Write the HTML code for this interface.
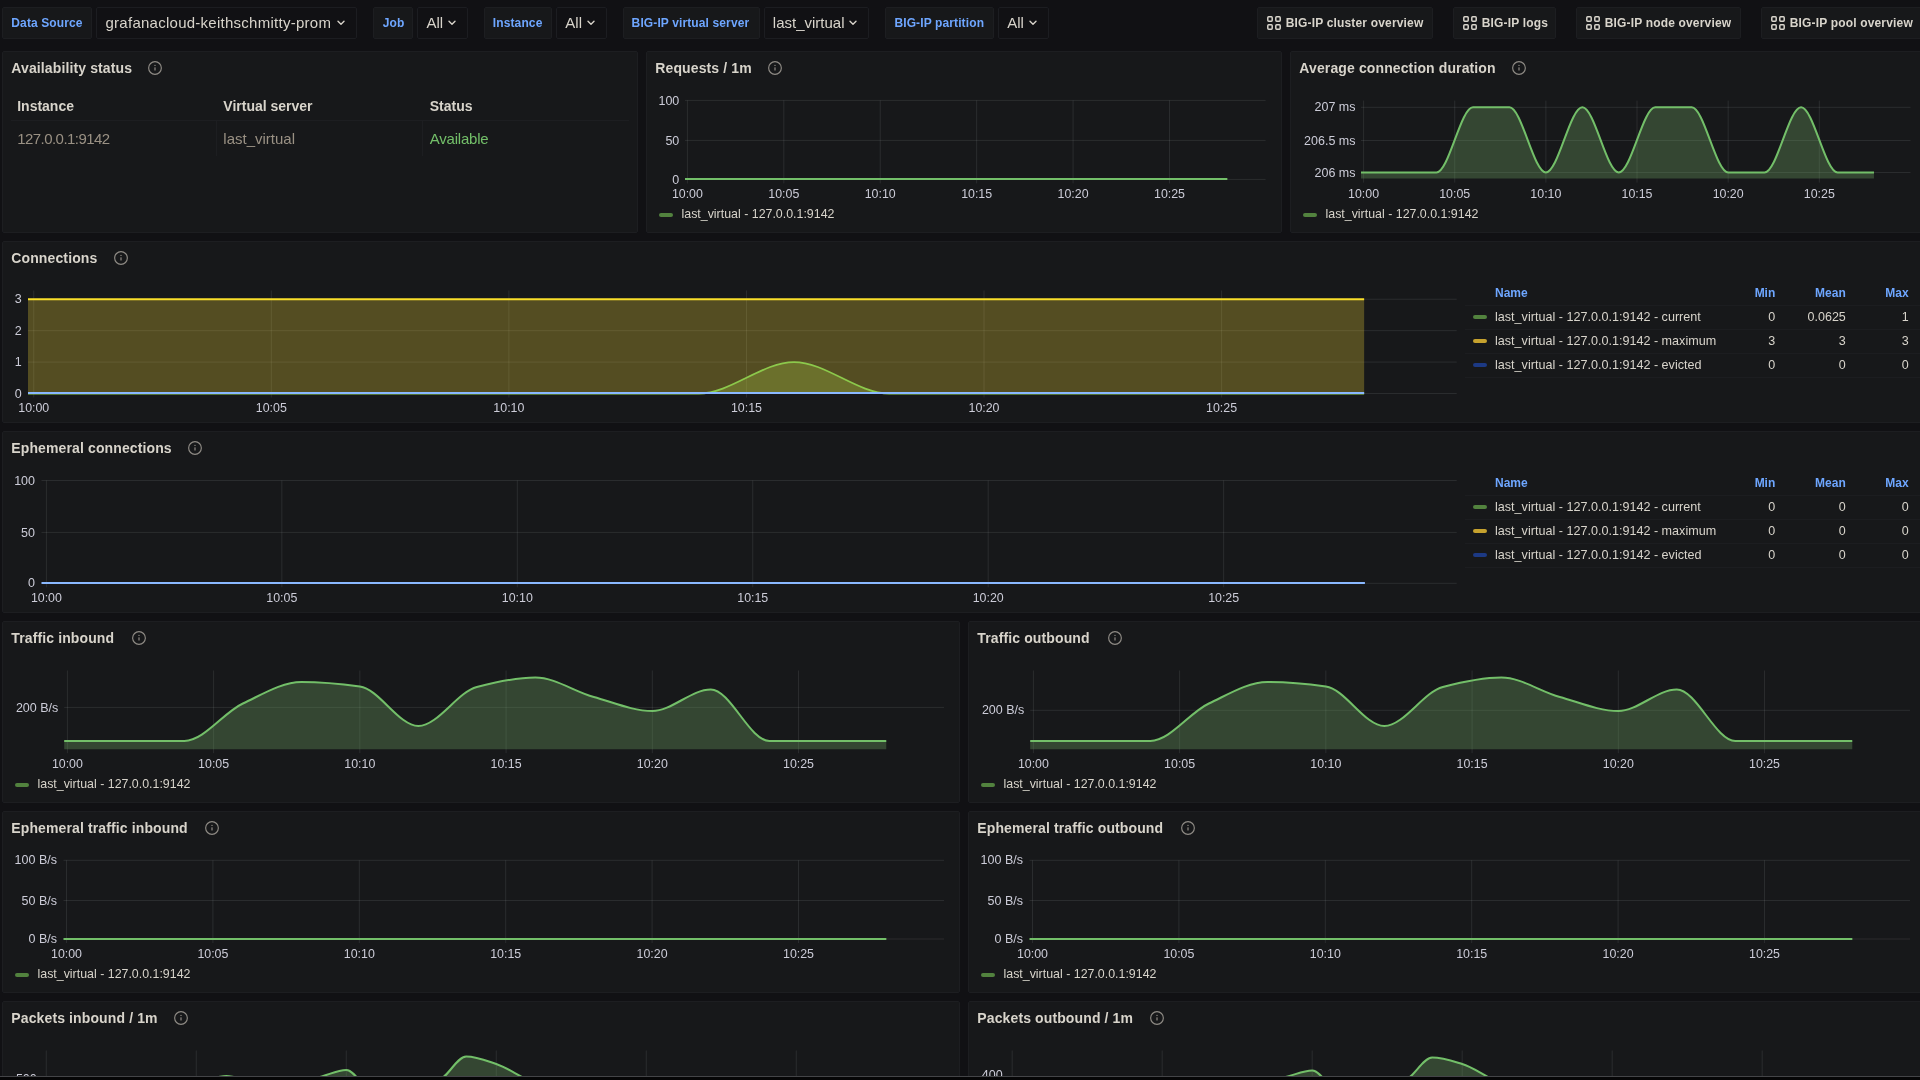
<!DOCTYPE html>
<html><head><meta charset="utf-8"><style>
html,body{margin:0;padding:0;width:1920px;height:1080px;overflow:hidden;background:#111114;}
body{position:relative;font-family:"Liberation Sans",sans-serif;}
.t{position:absolute;white-space:nowrap;}
.b{position:absolute;}
</style></head><body><div id="wrap" style="position:absolute;left:0;top:0;width:1920px;height:1080px;will-change:transform">
<div class="b" style="left:2px;top:7px;width:90px;height:32px;background:#17181a;border:1px solid #1d1e21;border-radius:2px;box-sizing:border-box;"></div>
<div class="t" style="left:11.30px;top:15.64px;font-size:12px;line-height:14.4px;font-weight:700;color:#6ea6ff;letter-spacing:0.12px">Data Source</div>
<div class="b" style="left:96px;top:7px;width:261px;height:32px;background:#111114;border:1px solid #1c1d21;border-radius:2px;box-sizing:border-box;"></div>
<div class="t" style="left:105.50px;top:13.80px;font-size:15px;line-height:18.0px;font-weight:400;color:#d8d4cb;letter-spacing:0.26px">grafanacloud-keithschmitty-prom</div>
<svg class="b" style="left:337px;top:20px" width="8" height="6" viewBox="0 0 8 6"><path d="M1 1.2 L4 4.2 L7 1.2" fill="none" stroke="#d8d4cb" stroke-width="1.4" stroke-linecap="round" stroke-linejoin="round"/></svg>
<div class="b" style="left:373px;top:7px;width:40px;height:32px;background:#17181a;border:1px solid #1d1e21;border-radius:2px;box-sizing:border-box;"></div>
<div class="t" style="left:382.70px;top:15.64px;font-size:12px;line-height:14.4px;font-weight:700;color:#6ea6ff;letter-spacing:0.12px">Job</div>
<div class="b" style="left:417px;top:7px;width:51px;height:32px;background:#111114;border:1px solid #1c1d21;border-radius:2px;box-sizing:border-box;"></div>
<div class="t" style="left:426.50px;top:13.80px;font-size:15px;line-height:18.0px;font-weight:400;color:#d8d4cb;">All</div>
<svg class="b" style="left:448px;top:20px" width="8" height="6" viewBox="0 0 8 6"><path d="M1 1.2 L4 4.2 L7 1.2" fill="none" stroke="#d8d4cb" stroke-width="1.4" stroke-linecap="round" stroke-linejoin="round"/></svg>
<div class="b" style="left:484px;top:7px;width:68px;height:32px;background:#17181a;border:1px solid #1d1e21;border-radius:2px;box-sizing:border-box;"></div>
<div class="t" style="left:492.80px;top:15.64px;font-size:12px;line-height:14.4px;font-weight:700;color:#6ea6ff;letter-spacing:0.12px">Instance</div>
<div class="b" style="left:556px;top:7px;width:51px;height:32px;background:#111114;border:1px solid #1c1d21;border-radius:2px;box-sizing:border-box;"></div>
<div class="t" style="left:565.30px;top:13.80px;font-size:15px;line-height:18.0px;font-weight:400;color:#d8d4cb;">All</div>
<svg class="b" style="left:587px;top:20px" width="8" height="6" viewBox="0 0 8 6"><path d="M1 1.2 L4 4.2 L7 1.2" fill="none" stroke="#d8d4cb" stroke-width="1.4" stroke-linecap="round" stroke-linejoin="round"/></svg>
<div class="b" style="left:623px;top:7px;width:137px;height:32px;background:#17181a;border:1px solid #1d1e21;border-radius:2px;box-sizing:border-box;"></div>
<div class="t" style="left:631.60px;top:15.64px;font-size:12px;line-height:14.4px;font-weight:700;color:#6ea6ff;letter-spacing:0.12px">BIG-IP virtual server</div>
<div class="b" style="left:764px;top:7px;width:105px;height:32px;background:#111114;border:1px solid #1c1d21;border-radius:2px;box-sizing:border-box;"></div>
<div class="t" style="left:772.80px;top:13.80px;font-size:15px;line-height:18.0px;font-weight:400;color:#d8d4cb;">last_virtual</div>
<svg class="b" style="left:849px;top:20px" width="8" height="6" viewBox="0 0 8 6"><path d="M1 1.2 L4 4.2 L7 1.2" fill="none" stroke="#d8d4cb" stroke-width="1.4" stroke-linecap="round" stroke-linejoin="round"/></svg>
<div class="b" style="left:885px;top:7px;width:109px;height:32px;background:#17181a;border:1px solid #1d1e21;border-radius:2px;box-sizing:border-box;"></div>
<div class="t" style="left:894.40px;top:15.64px;font-size:12px;line-height:14.4px;font-weight:700;color:#6ea6ff;letter-spacing:0.12px">BIG-IP partition</div>
<div class="b" style="left:998px;top:7px;width:51px;height:32px;background:#111114;border:1px solid #1c1d21;border-radius:2px;box-sizing:border-box;"></div>
<div class="t" style="left:1007.20px;top:13.80px;font-size:15px;line-height:18.0px;font-weight:400;color:#d8d4cb;">All</div>
<svg class="b" style="left:1029px;top:20px" width="8" height="6" viewBox="0 0 8 6"><path d="M1 1.2 L4 4.2 L7 1.2" fill="none" stroke="#d8d4cb" stroke-width="1.4" stroke-linecap="round" stroke-linejoin="round"/></svg>
<div class="b" style="left:1257px;top:7px;width:176px;height:32px;background:#17181a;border:1px solid #1d1e21;border-radius:2px;box-sizing:border-box;"></div>
<svg class="b" style="left:1267px;top:16px" width="14" height="14" viewBox="0 0 14 14"><rect x="0.8" y="0.8" width="4.4" height="4.4" rx="0.9" fill="none" stroke="#d8d4cb" stroke-width="1.5"/><rect x="8.8" y="0.8" width="4.4" height="4.4" rx="0.9" fill="none" stroke="#d8d4cb" stroke-width="1.5"/><rect x="0.8" y="8.8" width="4.4" height="4.4" rx="0.9" fill="none" stroke="#d8d4cb" stroke-width="1.5"/><rect x="8.8" y="8.8" width="4.4" height="4.4" rx="0.9" fill="none" stroke="#d8d4cb" stroke-width="1.5"/></svg>
<div class="t" style="left:1285.70px;top:15.64px;font-size:12px;line-height:14.4px;font-weight:700;color:#d8d4cb;letter-spacing:0.17px">BIG-IP cluster overview</div>
<div class="b" style="left:1453px;top:7px;width:103px;height:32px;background:#17181a;border:1px solid #1d1e21;border-radius:2px;box-sizing:border-box;"></div>
<svg class="b" style="left:1463px;top:16px" width="14" height="14" viewBox="0 0 14 14"><rect x="0.8" y="0.8" width="4.4" height="4.4" rx="0.9" fill="none" stroke="#d8d4cb" stroke-width="1.5"/><rect x="8.8" y="0.8" width="4.4" height="4.4" rx="0.9" fill="none" stroke="#d8d4cb" stroke-width="1.5"/><rect x="0.8" y="8.8" width="4.4" height="4.4" rx="0.9" fill="none" stroke="#d8d4cb" stroke-width="1.5"/><rect x="8.8" y="8.8" width="4.4" height="4.4" rx="0.9" fill="none" stroke="#d8d4cb" stroke-width="1.5"/></svg>
<div class="t" style="left:1481.70px;top:15.64px;font-size:12px;line-height:14.4px;font-weight:700;color:#d8d4cb;letter-spacing:0.17px">BIG-IP logs</div>
<div class="b" style="left:1576px;top:7px;width:165px;height:32px;background:#17181a;border:1px solid #1d1e21;border-radius:2px;box-sizing:border-box;"></div>
<svg class="b" style="left:1586px;top:16px" width="14" height="14" viewBox="0 0 14 14"><rect x="0.8" y="0.8" width="4.4" height="4.4" rx="0.9" fill="none" stroke="#d8d4cb" stroke-width="1.5"/><rect x="8.8" y="0.8" width="4.4" height="4.4" rx="0.9" fill="none" stroke="#d8d4cb" stroke-width="1.5"/><rect x="0.8" y="8.8" width="4.4" height="4.4" rx="0.9" fill="none" stroke="#d8d4cb" stroke-width="1.5"/><rect x="8.8" y="8.8" width="4.4" height="4.4" rx="0.9" fill="none" stroke="#d8d4cb" stroke-width="1.5"/></svg>
<div class="t" style="left:1604.70px;top:15.64px;font-size:12px;line-height:14.4px;font-weight:700;color:#d8d4cb;letter-spacing:0.17px">BIG-IP node overview</div>
<div class="b" style="left:1761px;top:7px;width:199px;height:32px;background:#17181a;border:1px solid #1d1e21;border-radius:2px;box-sizing:border-box;"></div>
<svg class="b" style="left:1771px;top:16px" width="14" height="14" viewBox="0 0 14 14"><rect x="0.8" y="0.8" width="4.4" height="4.4" rx="0.9" fill="none" stroke="#d8d4cb" stroke-width="1.5"/><rect x="8.8" y="0.8" width="4.4" height="4.4" rx="0.9" fill="none" stroke="#d8d4cb" stroke-width="1.5"/><rect x="0.8" y="8.8" width="4.4" height="4.4" rx="0.9" fill="none" stroke="#d8d4cb" stroke-width="1.5"/><rect x="8.8" y="8.8" width="4.4" height="4.4" rx="0.9" fill="none" stroke="#d8d4cb" stroke-width="1.5"/></svg>
<div class="t" style="left:1789.70px;top:15.64px;font-size:12px;line-height:14.4px;font-weight:700;color:#d8d4cb;letter-spacing:0.17px">BIG-IP pool overview</div>
<div class="b" style="left:2px;top:51px;width:636px;height:182px;background:#17181a;border:1px solid #1d1e21;border-radius:2px;box-sizing:border-box;"></div>
<div class="t" style="left:11.30px;top:59.75px;font-size:14px;line-height:16.8px;font-weight:700;color:#d8d4cb;letter-spacing:0.12px">Availability status</div>
<svg class="b" style="left:147px;top:60px" width="16" height="16" viewBox="0 0 16 16"><circle cx="8" cy="8" r="6.35" fill="none" stroke="#8f8b85" stroke-width="1.15"/><rect x="7.4" y="7.3" width="1.2" height="3.2" rx="0.5" fill="#8f8b85"/><circle cx="8" cy="5.4" r="0.7" fill="#8f8b85"/></svg>
<div class="t" style="left:17.20px;top:97.55px;font-size:14px;line-height:16.8px;font-weight:700;color:#d8d4cb;">Instance</div>
<div class="t" style="left:223.30px;top:97.55px;font-size:14px;line-height:16.8px;font-weight:700;color:#d8d4cb;">Virtual server</div>
<div class="t" style="left:429.70px;top:97.55px;font-size:14px;line-height:16.8px;font-weight:700;color:#d8d4cb;">Status</div>
<div class="b" style="left:11px;top:120px;width:618px;height:1px;background:#1d1e21;border-radius:0px;box-sizing:border-box;"></div>
<div class="b" style="left:216px;top:121px;width:1px;height:35px;background:#1d1e21;border-radius:0px;box-sizing:border-box;"></div>
<div class="b" style="left:422px;top:121px;width:1px;height:35px;background:#1d1e21;border-radius:0px;box-sizing:border-box;"></div>
<div class="t" style="left:17.20px;top:130.40px;font-size:15px;line-height:18.0px;font-weight:400;color:#9a9184;letter-spacing:-0.55px">127.0.0.1:9142</div>
<div class="t" style="left:223.30px;top:130.20px;font-size:15px;line-height:18.0px;font-weight:400;color:#9a9184;">last_virtual</div>
<div class="t" style="left:429.70px;top:130.20px;font-size:15px;line-height:18.0px;font-weight:400;color:#73bf69;letter-spacing:-0.2px">Available</div>
<div class="b" style="left:646px;top:51px;width:636px;height:182px;background:#17181a;border:1px solid #1d1e21;border-radius:2px;box-sizing:border-box;"></div>
<div class="t" style="left:655.30px;top:59.75px;font-size:14px;line-height:16.8px;font-weight:700;color:#d8d4cb;letter-spacing:0.12px">Requests / 1m</div>
<svg class="b" style="left:767px;top:60px" width="16" height="16" viewBox="0 0 16 16"><circle cx="8" cy="8" r="6.35" fill="none" stroke="#8f8b85" stroke-width="1.15"/><rect x="7.4" y="7.3" width="1.2" height="3.2" rx="0.5" fill="#8f8b85"/><circle cx="8" cy="5.4" r="0.7" fill="#8f8b85"/></svg>
<svg class="b" style="left:0;top:0" width="1920" height="1080" viewBox="0 0 1920 1080"><line x1="685" y1="100.4" x2="1265.6" y2="100.4" stroke="rgba(240,250,255,0.09)" stroke-width="1"/><line x1="685" y1="140.4" x2="1265.6" y2="140.4" stroke="rgba(240,250,255,0.09)" stroke-width="1"/><line x1="685" y1="179.4" x2="1265.6" y2="179.4" stroke="rgba(240,250,255,0.09)" stroke-width="1"/><line x1="687.40" y1="100.4" x2="687.40" y2="183.4" stroke="rgba(240,250,255,0.09)" stroke-width="1"/><line x1="783.82" y1="100.4" x2="783.82" y2="183.4" stroke="rgba(240,250,255,0.09)" stroke-width="1"/><line x1="880.24" y1="100.4" x2="880.24" y2="183.4" stroke="rgba(240,250,255,0.09)" stroke-width="1"/><line x1="976.66" y1="100.4" x2="976.66" y2="183.4" stroke="rgba(240,250,255,0.09)" stroke-width="1"/><line x1="1073.08" y1="100.4" x2="1073.08" y2="183.4" stroke="rgba(240,250,255,0.09)" stroke-width="1"/><line x1="1169.50" y1="100.4" x2="1169.50" y2="183.4" stroke="rgba(240,250,255,0.09)" stroke-width="1"/><path d="M685.00 179.00 L1227.35 179.00" fill="none" stroke="#73bf69" stroke-width="2" stroke-linejoin="round"/></svg>
<div class="t" style="left:79.30px;width:600px;text-align:right;top:93.57px;font-size:12.5px;line-height:15.0px;font-weight:400;color:#ccccd8;">100</div>
<div class="t" style="left:79.30px;width:600px;text-align:right;top:133.57px;font-size:12.5px;line-height:15.0px;font-weight:400;color:#ccccd8;">50</div>
<div class="t" style="left:79.30px;width:600px;text-align:right;top:172.57px;font-size:12.5px;line-height:15.0px;font-weight:400;color:#ccccd8;">0</div>
<div class="t" style="left:537.40px;width:300px;text-align:center;top:187.16px;font-size:12.4px;line-height:14.88px;font-weight:400;color:#ccccd8;">10:00</div>
<div class="t" style="left:633.82px;width:300px;text-align:center;top:187.16px;font-size:12.4px;line-height:14.88px;font-weight:400;color:#ccccd8;">10:05</div>
<div class="t" style="left:730.24px;width:300px;text-align:center;top:187.16px;font-size:12.4px;line-height:14.88px;font-weight:400;color:#ccccd8;">10:10</div>
<div class="t" style="left:826.66px;width:300px;text-align:center;top:187.16px;font-size:12.4px;line-height:14.88px;font-weight:400;color:#ccccd8;">10:15</div>
<div class="t" style="left:923.08px;width:300px;text-align:center;top:187.16px;font-size:12.4px;line-height:14.88px;font-weight:400;color:#ccccd8;">10:20</div>
<div class="t" style="left:1019.50px;width:300px;text-align:center;top:187.16px;font-size:12.4px;line-height:14.88px;font-weight:400;color:#ccccd8;">10:25</div>
<div class="b" style="left:659px;top:212.80px;width:14px;height:4px;border-radius:2px;background:#52823e"></div>
<div class="t" style="left:681.50px;top:206.96px;font-size:12.4px;line-height:14.88px;font-weight:400;color:#d8d4cb;">last_virtual - 127.0.0.1:9142</div>
<div class="b" style="left:1290px;top:51px;width:636px;height:182px;background:#17181a;border:1px solid #1d1e21;border-radius:2px;box-sizing:border-box;"></div>
<div class="t" style="left:1299.30px;top:59.75px;font-size:14px;line-height:16.8px;font-weight:700;color:#d8d4cb;letter-spacing:0.12px">Average connection duration</div>
<svg class="b" style="left:1511px;top:60px" width="16" height="16" viewBox="0 0 16 16"><circle cx="8" cy="8" r="6.35" fill="none" stroke="#8f8b85" stroke-width="1.15"/><rect x="7.4" y="7.3" width="1.2" height="3.2" rx="0.5" fill="#8f8b85"/><circle cx="8" cy="5.4" r="0.7" fill="#8f8b85"/></svg>
<svg class="b" style="left:0;top:0" width="1920" height="1080" viewBox="0 0 1920 1080"><line x1="1361" y1="107.3" x2="1910.5" y2="107.3" stroke="rgba(240,250,255,0.09)" stroke-width="1"/><line x1="1361" y1="140.5" x2="1910.5" y2="140.5" stroke="rgba(240,250,255,0.09)" stroke-width="1"/><line x1="1361" y1="172.5" x2="1910.5" y2="172.5" stroke="rgba(240,250,255,0.09)" stroke-width="1"/><line x1="1363.60" y1="100.6" x2="1363.60" y2="182.6" stroke="rgba(240,250,255,0.09)" stroke-width="1"/><line x1="1454.74" y1="100.6" x2="1454.74" y2="182.6" stroke="rgba(240,250,255,0.09)" stroke-width="1"/><line x1="1545.88" y1="100.6" x2="1545.88" y2="182.6" stroke="rgba(240,250,255,0.09)" stroke-width="1"/><line x1="1637.02" y1="100.6" x2="1637.02" y2="182.6" stroke="rgba(240,250,255,0.09)" stroke-width="1"/><line x1="1728.16" y1="100.6" x2="1728.16" y2="182.6" stroke="rgba(240,250,255,0.09)" stroke-width="1"/><line x1="1819.30" y1="100.6" x2="1819.30" y2="182.6" stroke="rgba(240,250,255,0.09)" stroke-width="1"/><path d="M1361.00 172.50 C1374.02 172.50 1387.04 172.50 1400.06 172.50 C1412.21 172.50 1424.36 172.50 1436.51 172.50 C1448.66 172.50 1460.82 107.30 1472.97 107.30 C1485.12 107.30 1497.27 107.30 1509.42 107.30 C1521.58 107.30 1533.73 172.50 1545.88 172.50 C1558.03 172.50 1570.18 107.30 1582.34 107.30 C1594.49 107.30 1606.64 172.50 1618.79 172.50 C1630.94 172.50 1643.10 107.30 1655.25 107.30 C1667.40 107.30 1679.55 107.30 1691.70 107.30 C1703.86 107.30 1716.01 172.50 1728.16 172.50 C1740.31 172.50 1752.46 172.50 1764.62 172.50 C1776.77 172.50 1788.92 107.30 1801.07 107.30 C1813.22 107.30 1825.38 172.50 1837.53 172.50 C1849.68 172.50 1861.83 172.50 1873.98 172.50 L1873.98 178.6 L1361.00 178.6 Z" fill="rgba(120,180,105,0.3)"/><path d="M1361.00 172.50 C1374.02 172.50 1387.04 172.50 1400.06 172.50 C1412.21 172.50 1424.36 172.50 1436.51 172.50 C1448.66 172.50 1460.82 107.30 1472.97 107.30 C1485.12 107.30 1497.27 107.30 1509.42 107.30 C1521.58 107.30 1533.73 172.50 1545.88 172.50 C1558.03 172.50 1570.18 107.30 1582.34 107.30 C1594.49 107.30 1606.64 172.50 1618.79 172.50 C1630.94 172.50 1643.10 107.30 1655.25 107.30 C1667.40 107.30 1679.55 107.30 1691.70 107.30 C1703.86 107.30 1716.01 172.50 1728.16 172.50 C1740.31 172.50 1752.46 172.50 1764.62 172.50 C1776.77 172.50 1788.92 107.30 1801.07 107.30 C1813.22 107.30 1825.38 172.50 1837.53 172.50 C1849.68 172.50 1861.83 172.50 1873.98 172.50" fill="none" stroke="#73bf69" stroke-width="2" stroke-linejoin="round"/></svg>
<div class="t" style="left:755.50px;width:600px;text-align:right;top:100.47px;font-size:12.5px;line-height:15.0px;font-weight:400;color:#ccccd8;">207 ms</div>
<div class="t" style="left:755.50px;width:600px;text-align:right;top:133.67px;font-size:12.5px;line-height:15.0px;font-weight:400;color:#ccccd8;">206.5 ms</div>
<div class="t" style="left:755.50px;width:600px;text-align:right;top:165.67px;font-size:12.5px;line-height:15.0px;font-weight:400;color:#ccccd8;">206 ms</div>
<div class="t" style="left:1213.60px;width:300px;text-align:center;top:187.16px;font-size:12.4px;line-height:14.88px;font-weight:400;color:#ccccd8;">10:00</div>
<div class="t" style="left:1304.74px;width:300px;text-align:center;top:187.16px;font-size:12.4px;line-height:14.88px;font-weight:400;color:#ccccd8;">10:05</div>
<div class="t" style="left:1395.88px;width:300px;text-align:center;top:187.16px;font-size:12.4px;line-height:14.88px;font-weight:400;color:#ccccd8;">10:10</div>
<div class="t" style="left:1487.02px;width:300px;text-align:center;top:187.16px;font-size:12.4px;line-height:14.88px;font-weight:400;color:#ccccd8;">10:15</div>
<div class="t" style="left:1578.16px;width:300px;text-align:center;top:187.16px;font-size:12.4px;line-height:14.88px;font-weight:400;color:#ccccd8;">10:20</div>
<div class="t" style="left:1669.30px;width:300px;text-align:center;top:187.16px;font-size:12.4px;line-height:14.88px;font-weight:400;color:#ccccd8;">10:25</div>
<div class="b" style="left:1303px;top:212.80px;width:14px;height:4px;border-radius:2px;background:#52823e"></div>
<div class="t" style="left:1325.50px;top:206.96px;font-size:12.4px;line-height:14.88px;font-weight:400;color:#d8d4cb;">last_virtual - 127.0.0.1:9142</div>
<div class="b" style="left:2px;top:241px;width:1924px;height:182px;background:#17181a;border:1px solid #1d1e21;border-radius:2px;box-sizing:border-box;"></div>
<div class="t" style="left:11.30px;top:249.75px;font-size:14px;line-height:16.8px;font-weight:700;color:#d8d4cb;letter-spacing:0.12px">Connections</div>
<svg class="b" style="left:113px;top:250px" width="16" height="16" viewBox="0 0 16 16"><circle cx="8" cy="8" r="6.35" fill="none" stroke="#8f8b85" stroke-width="1.15"/><rect x="7.4" y="7.3" width="1.2" height="3.2" rx="0.5" fill="#8f8b85"/><circle cx="8" cy="5.4" r="0.7" fill="#8f8b85"/></svg>
<svg class="b" style="left:0;top:0" width="1920" height="1080" viewBox="0 0 1920 1080"><line x1="28" y1="299.24" x2="1456.7" y2="299.24" stroke="rgba(240,250,255,0.09)" stroke-width="1"/><line x1="28" y1="330.65999999999997" x2="1456.7" y2="330.65999999999997" stroke="rgba(240,250,255,0.09)" stroke-width="1"/><line x1="28" y1="362.08" x2="1456.7" y2="362.08" stroke="rgba(240,250,255,0.09)" stroke-width="1"/><line x1="28" y1="393.5" x2="1456.7" y2="393.5" stroke="rgba(240,250,255,0.09)" stroke-width="1"/><line x1="33.75" y1="290.5" x2="33.75" y2="397.5" stroke="rgba(240,250,255,0.09)" stroke-width="1"/><line x1="271.32" y1="290.5" x2="271.32" y2="397.5" stroke="rgba(240,250,255,0.09)" stroke-width="1"/><line x1="508.89" y1="290.5" x2="508.89" y2="397.5" stroke="rgba(240,250,255,0.09)" stroke-width="1"/><line x1="746.46" y1="290.5" x2="746.46" y2="397.5" stroke="rgba(240,250,255,0.09)" stroke-width="1"/><line x1="984.03" y1="290.5" x2="984.03" y2="397.5" stroke="rgba(240,250,255,0.09)" stroke-width="1"/><line x1="1221.60" y1="290.5" x2="1221.60" y2="397.5" stroke="rgba(240,250,255,0.09)" stroke-width="1"/><path d="M28.00 299.24 L1364.14 299.24 L1364.14 393.5 L28.00 393.5 Z" fill="rgba(250,222,60,0.27)"/><path d="M28.00 299.24 L1364.14 299.24" fill="none" stroke="#fade2a" stroke-width="2" stroke-linejoin="round"/><path d="M28.00 393.50 C61.59 393.50 95.19 393.50 128.78 393.50 C160.45 393.50 192.13 393.50 223.81 393.50 C255.48 393.50 287.16 393.50 318.83 393.50 C350.51 393.50 382.19 393.50 413.86 393.50 C445.54 393.50 477.21 393.50 508.89 393.50 C540.57 393.50 572.24 393.50 603.92 393.50 C635.59 393.50 667.27 393.50 698.95 393.50 C730.62 393.50 762.30 362.08 793.97 362.08 C825.65 362.08 857.33 393.50 889.00 393.50 C920.68 393.50 952.35 393.50 984.03 393.50 C1015.71 393.50 1047.38 393.50 1079.06 393.50 C1110.73 393.50 1142.41 393.50 1174.09 393.50 C1205.76 393.50 1237.44 393.50 1269.11 393.50 C1300.79 393.50 1332.47 393.50 1364.14 393.50 L1364.14 393.5 L28.00 393.5 Z" fill="rgba(150,175,62,0.36)"/><path d="M28.00 393.50 C61.59 393.50 95.19 393.50 128.78 393.50 C160.45 393.50 192.13 393.50 223.81 393.50 C255.48 393.50 287.16 393.50 318.83 393.50 C350.51 393.50 382.19 393.50 413.86 393.50 C445.54 393.50 477.21 393.50 508.89 393.50 C540.57 393.50 572.24 393.50 603.92 393.50 C635.59 393.50 667.27 393.50 698.95 393.50 C730.62 393.50 762.30 362.08 793.97 362.08 C825.65 362.08 857.33 393.50 889.00 393.50 C920.68 393.50 952.35 393.50 984.03 393.50 C1015.71 393.50 1047.38 393.50 1079.06 393.50 C1110.73 393.50 1142.41 393.50 1174.09 393.50 C1205.76 393.50 1237.44 393.50 1269.11 393.50 C1300.79 393.50 1332.47 393.50 1364.14 393.50" fill="none" stroke="#8cc94c" stroke-width="1.8" stroke-linejoin="round"/><path d="M28.00 393.00 L1364.14 393.00" fill="none" stroke="#8ab8ff" stroke-width="2" stroke-linejoin="round"/></svg>
<div class="t" style="left:-578.30px;width:600px;text-align:right;top:292.41px;font-size:12.5px;line-height:15.0px;font-weight:400;color:#ccccd8;">3</div>
<div class="t" style="left:-578.30px;width:600px;text-align:right;top:323.83px;font-size:12.5px;line-height:15.0px;font-weight:400;color:#ccccd8;">2</div>
<div class="t" style="left:-578.30px;width:600px;text-align:right;top:355.25px;font-size:12.5px;line-height:15.0px;font-weight:400;color:#ccccd8;">1</div>
<div class="t" style="left:-578.30px;width:600px;text-align:right;top:386.67px;font-size:12.5px;line-height:15.0px;font-weight:400;color:#ccccd8;">0</div>
<div class="t" style="left:-116.25px;width:300px;text-align:center;top:401.16px;font-size:12.4px;line-height:14.88px;font-weight:400;color:#ccccd8;">10:00</div>
<div class="t" style="left:121.32px;width:300px;text-align:center;top:401.16px;font-size:12.4px;line-height:14.88px;font-weight:400;color:#ccccd8;">10:05</div>
<div class="t" style="left:358.89px;width:300px;text-align:center;top:401.16px;font-size:12.4px;line-height:14.88px;font-weight:400;color:#ccccd8;">10:10</div>
<div class="t" style="left:596.46px;width:300px;text-align:center;top:401.16px;font-size:12.4px;line-height:14.88px;font-weight:400;color:#ccccd8;">10:15</div>
<div class="t" style="left:834.03px;width:300px;text-align:center;top:401.16px;font-size:12.4px;line-height:14.88px;font-weight:400;color:#ccccd8;">10:20</div>
<div class="t" style="left:1071.60px;width:300px;text-align:center;top:401.16px;font-size:12.4px;line-height:14.88px;font-weight:400;color:#ccccd8;">10:25</div>
<div class="t" style="left:1495.00px;top:285.64px;font-size:12px;line-height:14.4px;font-weight:700;color:#6ea6ff;">Name</div>
<div class="t" style="left:1175.30px;width:600px;text-align:right;top:285.64px;font-size:12px;line-height:14.4px;font-weight:700;color:#6ea6ff;">Min</div>
<div class="t" style="left:1245.80px;width:600px;text-align:right;top:285.64px;font-size:12px;line-height:14.4px;font-weight:700;color:#6ea6ff;">Mean</div>
<div class="t" style="left:1308.60px;width:600px;text-align:right;top:285.64px;font-size:12px;line-height:14.4px;font-weight:700;color:#6ea6ff;">Max</div>
<div class="b" style="left:1465px;top:305px;width:455px;height:1px;background:#1c1d20;border-radius:0px;box-sizing:border-box;"></div>
<div class="b" style="left:1473px;top:315.20px;width:14px;height:4px;border-radius:2px;background:#52823e"></div>
<div class="t" style="left:1495.00px;top:309.67px;font-size:12.6px;line-height:15.12px;font-weight:400;color:#d8d4cb;">last_virtual - 127.0.0.1:9142 - current</div>
<div class="t" style="left:1175.30px;width:600px;text-align:right;top:309.77px;font-size:12.5px;line-height:15.0px;font-weight:400;color:#d8d4cb;">0</div>
<div class="t" style="left:1245.80px;width:600px;text-align:right;top:309.77px;font-size:12.5px;line-height:15.0px;font-weight:400;color:#d8d4cb;">0.0625</div>
<div class="t" style="left:1308.60px;width:600px;text-align:right;top:309.77px;font-size:12.5px;line-height:15.0px;font-weight:400;color:#d8d4cb;">1</div>
<div class="b" style="left:1465px;top:329px;width:455px;height:1px;background:#1c1d20;border-radius:0px;box-sizing:border-box;"></div>
<div class="b" style="left:1473px;top:339.20px;width:14px;height:4px;border-radius:2px;background:#c6a22e"></div>
<div class="t" style="left:1495.00px;top:333.67px;font-size:12.6px;line-height:15.12px;font-weight:400;color:#d8d4cb;">last_virtual - 127.0.0.1:9142 - maximum</div>
<div class="t" style="left:1175.30px;width:600px;text-align:right;top:333.77px;font-size:12.5px;line-height:15.0px;font-weight:400;color:#d8d4cb;">3</div>
<div class="t" style="left:1245.80px;width:600px;text-align:right;top:333.77px;font-size:12.5px;line-height:15.0px;font-weight:400;color:#d8d4cb;">3</div>
<div class="t" style="left:1308.60px;width:600px;text-align:right;top:333.77px;font-size:12.5px;line-height:15.0px;font-weight:400;color:#d8d4cb;">3</div>
<div class="b" style="left:1465px;top:353px;width:455px;height:1px;background:#1c1d20;border-radius:0px;box-sizing:border-box;"></div>
<div class="b" style="left:1473px;top:363.20px;width:14px;height:4px;border-radius:2px;background:#1c3984"></div>
<div class="t" style="left:1495.00px;top:357.67px;font-size:12.6px;line-height:15.12px;font-weight:400;color:#d8d4cb;">last_virtual - 127.0.0.1:9142 - evicted</div>
<div class="t" style="left:1175.30px;width:600px;text-align:right;top:357.77px;font-size:12.5px;line-height:15.0px;font-weight:400;color:#d8d4cb;">0</div>
<div class="t" style="left:1245.80px;width:600px;text-align:right;top:357.77px;font-size:12.5px;line-height:15.0px;font-weight:400;color:#d8d4cb;">0</div>
<div class="t" style="left:1308.60px;width:600px;text-align:right;top:357.77px;font-size:12.5px;line-height:15.0px;font-weight:400;color:#d8d4cb;">0</div>
<div class="b" style="left:1465px;top:377px;width:455px;height:1px;background:#1c1d20;border-radius:0px;box-sizing:border-box;"></div>
<div class="b" style="left:2px;top:431px;width:1924px;height:182px;background:#17181a;border:1px solid #1d1e21;border-radius:2px;box-sizing:border-box;"></div>
<div class="t" style="left:11.30px;top:439.75px;font-size:14px;line-height:16.8px;font-weight:700;color:#d8d4cb;letter-spacing:0.12px">Ephemeral connections</div>
<svg class="b" style="left:187px;top:440px" width="16" height="16" viewBox="0 0 16 16"><circle cx="8" cy="8" r="6.35" fill="none" stroke="#8f8b85" stroke-width="1.15"/><rect x="7.4" y="7.3" width="1.2" height="3.2" rx="0.5" fill="#8f8b85"/><circle cx="8" cy="5.4" r="0.7" fill="#8f8b85"/></svg>
<svg class="b" style="left:0;top:0" width="1920" height="1080" viewBox="0 0 1920 1080"><line x1="41.5" y1="480.5" x2="1456.7" y2="480.5" stroke="rgba(240,250,255,0.09)" stroke-width="1"/><line x1="41.5" y1="532.4" x2="1456.7" y2="532.4" stroke="rgba(240,250,255,0.09)" stroke-width="1"/><line x1="41.5" y1="583.3" x2="1456.7" y2="583.3" stroke="rgba(240,250,255,0.09)" stroke-width="1"/><line x1="46.40" y1="480.5" x2="46.40" y2="587.3" stroke="rgba(240,250,255,0.09)" stroke-width="1"/><line x1="281.85" y1="480.5" x2="281.85" y2="587.3" stroke="rgba(240,250,255,0.09)" stroke-width="1"/><line x1="517.30" y1="480.5" x2="517.30" y2="587.3" stroke="rgba(240,250,255,0.09)" stroke-width="1"/><line x1="752.75" y1="480.5" x2="752.75" y2="587.3" stroke="rgba(240,250,255,0.09)" stroke-width="1"/><line x1="988.20" y1="480.5" x2="988.20" y2="587.3" stroke="rgba(240,250,255,0.09)" stroke-width="1"/><line x1="1223.65" y1="480.5" x2="1223.65" y2="587.3" stroke="rgba(240,250,255,0.09)" stroke-width="1"/><path d="M41.50 583.00 L1364.92 583.00" fill="none" stroke="#8ab8ff" stroke-width="2" stroke-linejoin="round"/></svg>
<div class="t" style="left:-565.00px;width:600px;text-align:right;top:473.67px;font-size:12.5px;line-height:15.0px;font-weight:400;color:#ccccd8;">100</div>
<div class="t" style="left:-565.00px;width:600px;text-align:right;top:525.57px;font-size:12.5px;line-height:15.0px;font-weight:400;color:#ccccd8;">50</div>
<div class="t" style="left:-565.00px;width:600px;text-align:right;top:576.47px;font-size:12.5px;line-height:15.0px;font-weight:400;color:#ccccd8;">0</div>
<div class="t" style="left:-103.60px;width:300px;text-align:center;top:591.16px;font-size:12.4px;line-height:14.88px;font-weight:400;color:#ccccd8;">10:00</div>
<div class="t" style="left:131.85px;width:300px;text-align:center;top:591.16px;font-size:12.4px;line-height:14.88px;font-weight:400;color:#ccccd8;">10:05</div>
<div class="t" style="left:367.30px;width:300px;text-align:center;top:591.16px;font-size:12.4px;line-height:14.88px;font-weight:400;color:#ccccd8;">10:10</div>
<div class="t" style="left:602.75px;width:300px;text-align:center;top:591.16px;font-size:12.4px;line-height:14.88px;font-weight:400;color:#ccccd8;">10:15</div>
<div class="t" style="left:838.20px;width:300px;text-align:center;top:591.16px;font-size:12.4px;line-height:14.88px;font-weight:400;color:#ccccd8;">10:20</div>
<div class="t" style="left:1073.65px;width:300px;text-align:center;top:591.16px;font-size:12.4px;line-height:14.88px;font-weight:400;color:#ccccd8;">10:25</div>
<div class="t" style="left:1495.00px;top:475.64px;font-size:12px;line-height:14.4px;font-weight:700;color:#6ea6ff;">Name</div>
<div class="t" style="left:1175.30px;width:600px;text-align:right;top:475.64px;font-size:12px;line-height:14.4px;font-weight:700;color:#6ea6ff;">Min</div>
<div class="t" style="left:1245.80px;width:600px;text-align:right;top:475.64px;font-size:12px;line-height:14.4px;font-weight:700;color:#6ea6ff;">Mean</div>
<div class="t" style="left:1308.60px;width:600px;text-align:right;top:475.64px;font-size:12px;line-height:14.4px;font-weight:700;color:#6ea6ff;">Max</div>
<div class="b" style="left:1465px;top:495px;width:455px;height:1px;background:#1c1d20;border-radius:0px;box-sizing:border-box;"></div>
<div class="b" style="left:1473px;top:505.20px;width:14px;height:4px;border-radius:2px;background:#52823e"></div>
<div class="t" style="left:1495.00px;top:499.67px;font-size:12.6px;line-height:15.12px;font-weight:400;color:#d8d4cb;">last_virtual - 127.0.0.1:9142 - current</div>
<div class="t" style="left:1175.30px;width:600px;text-align:right;top:499.77px;font-size:12.5px;line-height:15.0px;font-weight:400;color:#d8d4cb;">0</div>
<div class="t" style="left:1245.80px;width:600px;text-align:right;top:499.77px;font-size:12.5px;line-height:15.0px;font-weight:400;color:#d8d4cb;">0</div>
<div class="t" style="left:1308.60px;width:600px;text-align:right;top:499.77px;font-size:12.5px;line-height:15.0px;font-weight:400;color:#d8d4cb;">0</div>
<div class="b" style="left:1465px;top:519px;width:455px;height:1px;background:#1c1d20;border-radius:0px;box-sizing:border-box;"></div>
<div class="b" style="left:1473px;top:529.20px;width:14px;height:4px;border-radius:2px;background:#c6a22e"></div>
<div class="t" style="left:1495.00px;top:523.67px;font-size:12.6px;line-height:15.12px;font-weight:400;color:#d8d4cb;">last_virtual - 127.0.0.1:9142 - maximum</div>
<div class="t" style="left:1175.30px;width:600px;text-align:right;top:523.77px;font-size:12.5px;line-height:15.0px;font-weight:400;color:#d8d4cb;">0</div>
<div class="t" style="left:1245.80px;width:600px;text-align:right;top:523.77px;font-size:12.5px;line-height:15.0px;font-weight:400;color:#d8d4cb;">0</div>
<div class="t" style="left:1308.60px;width:600px;text-align:right;top:523.77px;font-size:12.5px;line-height:15.0px;font-weight:400;color:#d8d4cb;">0</div>
<div class="b" style="left:1465px;top:543px;width:455px;height:1px;background:#1c1d20;border-radius:0px;box-sizing:border-box;"></div>
<div class="b" style="left:1473px;top:553.20px;width:14px;height:4px;border-radius:2px;background:#1c3984"></div>
<div class="t" style="left:1495.00px;top:547.67px;font-size:12.6px;line-height:15.12px;font-weight:400;color:#d8d4cb;">last_virtual - 127.0.0.1:9142 - evicted</div>
<div class="t" style="left:1175.30px;width:600px;text-align:right;top:547.77px;font-size:12.5px;line-height:15.0px;font-weight:400;color:#d8d4cb;">0</div>
<div class="t" style="left:1245.80px;width:600px;text-align:right;top:547.77px;font-size:12.5px;line-height:15.0px;font-weight:400;color:#d8d4cb;">0</div>
<div class="t" style="left:1308.60px;width:600px;text-align:right;top:547.77px;font-size:12.5px;line-height:15.0px;font-weight:400;color:#d8d4cb;">0</div>
<div class="b" style="left:1465px;top:567px;width:455px;height:1px;background:#1c1d20;border-radius:0px;box-sizing:border-box;"></div>
<div class="b" style="left:2px;top:621px;width:958px;height:182px;background:#17181a;border:1px solid #1d1e21;border-radius:2px;box-sizing:border-box;"></div>
<div class="t" style="left:11.30px;top:629.75px;font-size:14px;line-height:16.8px;font-weight:700;color:#d8d4cb;letter-spacing:0.12px">Traffic inbound</div>
<svg class="b" style="left:131px;top:630px" width="16" height="16" viewBox="0 0 16 16"><circle cx="8" cy="8" r="6.35" fill="none" stroke="#8f8b85" stroke-width="1.15"/><rect x="7.4" y="7.3" width="1.2" height="3.2" rx="0.5" fill="#8f8b85"/><circle cx="8" cy="5.4" r="0.7" fill="#8f8b85"/></svg>
<svg class="b" style="left:0;top:0" width="1920" height="1080" viewBox="0 0 1920 1080"><line x1="64.2" y1="707.4" x2="944" y2="707.4" stroke="rgba(240,250,255,0.09)" stroke-width="1"/><line x1="67.40" y1="670.5" x2="67.40" y2="753.2" stroke="rgba(240,250,255,0.09)" stroke-width="1"/><line x1="213.62" y1="670.5" x2="213.62" y2="753.2" stroke="rgba(240,250,255,0.09)" stroke-width="1"/><line x1="359.85" y1="670.5" x2="359.85" y2="753.2" stroke="rgba(240,250,255,0.09)" stroke-width="1"/><line x1="506.08" y1="670.5" x2="506.08" y2="753.2" stroke="rgba(240,250,255,0.09)" stroke-width="1"/><line x1="652.30" y1="670.5" x2="652.30" y2="753.2" stroke="rgba(240,250,255,0.09)" stroke-width="1"/><line x1="798.52" y1="670.5" x2="798.52" y2="753.2" stroke="rgba(240,250,255,0.09)" stroke-width="1"/><path d="M64.20 741.00 C84.76 741.00 105.33 741.00 125.89 741.00 C145.39 741.00 164.88 741.00 184.38 741.00 C203.88 741.00 223.37 712.61 242.87 703.50 C262.37 694.39 281.86 682.00 301.36 682.00 C320.86 682.00 340.35 683.81 359.85 686.50 C379.35 689.19 398.84 726.00 418.34 726.00 C437.84 726.00 457.33 692.09 476.83 687.00 C496.33 681.91 515.82 677.50 535.32 677.50 C554.82 677.50 574.31 691.57 593.81 697.00 C613.31 702.43 632.80 711.00 652.30 711.00 C671.80 711.00 691.29 689.50 710.79 689.50 C730.29 689.50 749.78 741.00 769.28 741.00 C788.78 741.00 808.27 741.00 827.77 741.00 C847.27 741.00 866.76 741.00 886.26 741.00 L886.26 749.2 L64.20 749.2 Z" fill="rgba(120,180,105,0.3)"/><path d="M64.20 741.00 C84.76 741.00 105.33 741.00 125.89 741.00 C145.39 741.00 164.88 741.00 184.38 741.00 C203.88 741.00 223.37 712.61 242.87 703.50 C262.37 694.39 281.86 682.00 301.36 682.00 C320.86 682.00 340.35 683.81 359.85 686.50 C379.35 689.19 398.84 726.00 418.34 726.00 C437.84 726.00 457.33 692.09 476.83 687.00 C496.33 681.91 515.82 677.50 535.32 677.50 C554.82 677.50 574.31 691.57 593.81 697.00 C613.31 702.43 632.80 711.00 652.30 711.00 C671.80 711.00 691.29 689.50 710.79 689.50 C730.29 689.50 749.78 741.00 769.28 741.00 C788.78 741.00 808.27 741.00 827.77 741.00 C847.27 741.00 866.76 741.00 886.26 741.00" fill="none" stroke="#73bf69" stroke-width="2" stroke-linejoin="round"/></svg>
<div class="t" style="left:-541.70px;width:600px;text-align:right;top:700.57px;font-size:12.5px;line-height:15.0px;font-weight:400;color:#ccccd8;">200 B/s</div>
<div class="t" style="left:-82.60px;width:300px;text-align:center;top:757.16px;font-size:12.4px;line-height:14.88px;font-weight:400;color:#ccccd8;">10:00</div>
<div class="t" style="left:63.62px;width:300px;text-align:center;top:757.16px;font-size:12.4px;line-height:14.88px;font-weight:400;color:#ccccd8;">10:05</div>
<div class="t" style="left:209.85px;width:300px;text-align:center;top:757.16px;font-size:12.4px;line-height:14.88px;font-weight:400;color:#ccccd8;">10:10</div>
<div class="t" style="left:356.08px;width:300px;text-align:center;top:757.16px;font-size:12.4px;line-height:14.88px;font-weight:400;color:#ccccd8;">10:15</div>
<div class="t" style="left:502.30px;width:300px;text-align:center;top:757.16px;font-size:12.4px;line-height:14.88px;font-weight:400;color:#ccccd8;">10:20</div>
<div class="t" style="left:648.52px;width:300px;text-align:center;top:757.16px;font-size:12.4px;line-height:14.88px;font-weight:400;color:#ccccd8;">10:25</div>
<div class="b" style="left:15px;top:782.80px;width:14px;height:4px;border-radius:2px;background:#52823e"></div>
<div class="t" style="left:37.50px;top:776.96px;font-size:12.4px;line-height:14.88px;font-weight:400;color:#d8d4cb;">last_virtual - 127.0.0.1:9142</div>
<div class="b" style="left:968px;top:621px;width:958px;height:182px;background:#17181a;border:1px solid #1d1e21;border-radius:2px;box-sizing:border-box;"></div>
<div class="t" style="left:977.30px;top:629.75px;font-size:14px;line-height:16.8px;font-weight:700;color:#d8d4cb;letter-spacing:0.12px">Traffic outbound</div>
<svg class="b" style="left:1107px;top:630px" width="16" height="16" viewBox="0 0 16 16"><circle cx="8" cy="8" r="6.35" fill="none" stroke="#8f8b85" stroke-width="1.15"/><rect x="7.4" y="7.3" width="1.2" height="3.2" rx="0.5" fill="#8f8b85"/><circle cx="8" cy="5.4" r="0.7" fill="#8f8b85"/></svg>
<svg class="b" style="left:0;top:0" width="1920" height="1080" viewBox="0 0 1920 1080"><line x1="1030.2" y1="710.3" x2="1910" y2="710.3" stroke="rgba(240,250,255,0.09)" stroke-width="1"/><line x1="1033.40" y1="670.5" x2="1033.40" y2="753.2" stroke="rgba(240,250,255,0.09)" stroke-width="1"/><line x1="1179.62" y1="670.5" x2="1179.62" y2="753.2" stroke="rgba(240,250,255,0.09)" stroke-width="1"/><line x1="1325.85" y1="670.5" x2="1325.85" y2="753.2" stroke="rgba(240,250,255,0.09)" stroke-width="1"/><line x1="1472.08" y1="670.5" x2="1472.08" y2="753.2" stroke="rgba(240,250,255,0.09)" stroke-width="1"/><line x1="1618.30" y1="670.5" x2="1618.30" y2="753.2" stroke="rgba(240,250,255,0.09)" stroke-width="1"/><line x1="1764.53" y1="670.5" x2="1764.53" y2="753.2" stroke="rgba(240,250,255,0.09)" stroke-width="1"/><path d="M1030.20 741.00 C1050.76 741.00 1071.33 741.00 1091.89 741.00 C1111.39 741.00 1130.88 741.00 1150.38 741.00 C1169.88 741.00 1189.37 712.61 1208.87 703.50 C1228.37 694.39 1247.86 682.00 1267.36 682.00 C1286.86 682.00 1306.35 683.81 1325.85 686.50 C1345.35 689.19 1364.84 726.00 1384.34 726.00 C1403.84 726.00 1423.33 692.09 1442.83 687.00 C1462.33 681.91 1481.82 677.50 1501.32 677.50 C1520.82 677.50 1540.31 691.57 1559.81 697.00 C1579.31 702.43 1598.80 711.00 1618.30 711.00 C1637.80 711.00 1657.29 689.50 1676.79 689.50 C1696.29 689.50 1715.78 741.00 1735.28 741.00 C1754.78 741.00 1774.27 741.00 1793.77 741.00 C1813.27 741.00 1832.76 741.00 1852.26 741.00 L1852.26 749.2 L1030.20 749.2 Z" fill="rgba(120,180,105,0.3)"/><path d="M1030.20 741.00 C1050.76 741.00 1071.33 741.00 1091.89 741.00 C1111.39 741.00 1130.88 741.00 1150.38 741.00 C1169.88 741.00 1189.37 712.61 1208.87 703.50 C1228.37 694.39 1247.86 682.00 1267.36 682.00 C1286.86 682.00 1306.35 683.81 1325.85 686.50 C1345.35 689.19 1364.84 726.00 1384.34 726.00 C1403.84 726.00 1423.33 692.09 1442.83 687.00 C1462.33 681.91 1481.82 677.50 1501.32 677.50 C1520.82 677.50 1540.31 691.57 1559.81 697.00 C1579.31 702.43 1598.80 711.00 1618.30 711.00 C1637.80 711.00 1657.29 689.50 1676.79 689.50 C1696.29 689.50 1715.78 741.00 1735.28 741.00 C1754.78 741.00 1774.27 741.00 1793.77 741.00 C1813.27 741.00 1832.76 741.00 1852.26 741.00" fill="none" stroke="#73bf69" stroke-width="2" stroke-linejoin="round"/></svg>
<div class="t" style="left:424.30px;width:600px;text-align:right;top:703.47px;font-size:12.5px;line-height:15.0px;font-weight:400;color:#ccccd8;">200 B/s</div>
<div class="t" style="left:883.40px;width:300px;text-align:center;top:757.16px;font-size:12.4px;line-height:14.88px;font-weight:400;color:#ccccd8;">10:00</div>
<div class="t" style="left:1029.62px;width:300px;text-align:center;top:757.16px;font-size:12.4px;line-height:14.88px;font-weight:400;color:#ccccd8;">10:05</div>
<div class="t" style="left:1175.85px;width:300px;text-align:center;top:757.16px;font-size:12.4px;line-height:14.88px;font-weight:400;color:#ccccd8;">10:10</div>
<div class="t" style="left:1322.08px;width:300px;text-align:center;top:757.16px;font-size:12.4px;line-height:14.88px;font-weight:400;color:#ccccd8;">10:15</div>
<div class="t" style="left:1468.30px;width:300px;text-align:center;top:757.16px;font-size:12.4px;line-height:14.88px;font-weight:400;color:#ccccd8;">10:20</div>
<div class="t" style="left:1614.53px;width:300px;text-align:center;top:757.16px;font-size:12.4px;line-height:14.88px;font-weight:400;color:#ccccd8;">10:25</div>
<div class="b" style="left:981px;top:782.80px;width:14px;height:4px;border-radius:2px;background:#52823e"></div>
<div class="t" style="left:1003.50px;top:776.96px;font-size:12.4px;line-height:14.88px;font-weight:400;color:#d8d4cb;">last_virtual - 127.0.0.1:9142</div>
<div class="b" style="left:2px;top:811px;width:958px;height:182px;background:#17181a;border:1px solid #1d1e21;border-radius:2px;box-sizing:border-box;"></div>
<div class="t" style="left:11.30px;top:819.75px;font-size:14px;line-height:16.8px;font-weight:700;color:#d8d4cb;letter-spacing:0.12px">Ephemeral traffic inbound</div>
<svg class="b" style="left:204px;top:820px" width="16" height="16" viewBox="0 0 16 16"><circle cx="8" cy="8" r="6.35" fill="none" stroke="#8f8b85" stroke-width="1.15"/><rect x="7.4" y="7.3" width="1.2" height="3.2" rx="0.5" fill="#8f8b85"/><circle cx="8" cy="5.4" r="0.7" fill="#8f8b85"/></svg>
<svg class="b" style="left:0;top:0" width="1920" height="1080" viewBox="0 0 1920 1080"><line x1="63.5" y1="860.3" x2="944" y2="860.3" stroke="rgba(240,250,255,0.09)" stroke-width="1"/><line x1="63.5" y1="900.5" x2="944" y2="900.5" stroke="rgba(240,250,255,0.09)" stroke-width="1"/><line x1="63.5" y1="939" x2="944" y2="939" stroke="rgba(240,250,255,0.09)" stroke-width="1"/><line x1="66.50" y1="860.3" x2="66.50" y2="943" stroke="rgba(240,250,255,0.09)" stroke-width="1"/><line x1="212.90" y1="860.3" x2="212.90" y2="943" stroke="rgba(240,250,255,0.09)" stroke-width="1"/><line x1="359.30" y1="860.3" x2="359.30" y2="943" stroke="rgba(240,250,255,0.09)" stroke-width="1"/><line x1="505.70" y1="860.3" x2="505.70" y2="943" stroke="rgba(240,250,255,0.09)" stroke-width="1"/><line x1="652.10" y1="860.3" x2="652.10" y2="943" stroke="rgba(240,250,255,0.09)" stroke-width="1"/><line x1="798.50" y1="860.3" x2="798.50" y2="943" stroke="rgba(240,250,255,0.09)" stroke-width="1"/><path d="M63.50 939.00 L886.34 939.00" fill="none" stroke="#73bf69" stroke-width="2" stroke-linejoin="round"/></svg>
<div class="t" style="left:-543.00px;width:600px;text-align:right;top:853.47px;font-size:12.5px;line-height:15.0px;font-weight:400;color:#ccccd8;">100 B/s</div>
<div class="t" style="left:-543.00px;width:600px;text-align:right;top:893.67px;font-size:12.5px;line-height:15.0px;font-weight:400;color:#ccccd8;">50 B/s</div>
<div class="t" style="left:-543.00px;width:600px;text-align:right;top:932.17px;font-size:12.5px;line-height:15.0px;font-weight:400;color:#ccccd8;">0 B/s</div>
<div class="t" style="left:-83.50px;width:300px;text-align:center;top:946.96px;font-size:12.4px;line-height:14.88px;font-weight:400;color:#ccccd8;">10:00</div>
<div class="t" style="left:62.90px;width:300px;text-align:center;top:946.96px;font-size:12.4px;line-height:14.88px;font-weight:400;color:#ccccd8;">10:05</div>
<div class="t" style="left:209.30px;width:300px;text-align:center;top:946.96px;font-size:12.4px;line-height:14.88px;font-weight:400;color:#ccccd8;">10:10</div>
<div class="t" style="left:355.70px;width:300px;text-align:center;top:946.96px;font-size:12.4px;line-height:14.88px;font-weight:400;color:#ccccd8;">10:15</div>
<div class="t" style="left:502.10px;width:300px;text-align:center;top:946.96px;font-size:12.4px;line-height:14.88px;font-weight:400;color:#ccccd8;">10:20</div>
<div class="t" style="left:648.50px;width:300px;text-align:center;top:946.96px;font-size:12.4px;line-height:14.88px;font-weight:400;color:#ccccd8;">10:25</div>
<div class="b" style="left:15px;top:972.80px;width:14px;height:4px;border-radius:2px;background:#52823e"></div>
<div class="t" style="left:37.50px;top:966.96px;font-size:12.4px;line-height:14.88px;font-weight:400;color:#d8d4cb;">last_virtual - 127.0.0.1:9142</div>
<div class="b" style="left:968px;top:811px;width:958px;height:182px;background:#17181a;border:1px solid #1d1e21;border-radius:2px;box-sizing:border-box;"></div>
<div class="t" style="left:977.30px;top:819.75px;font-size:14px;line-height:16.8px;font-weight:700;color:#d8d4cb;letter-spacing:0.12px">Ephemeral traffic outbound</div>
<svg class="b" style="left:1180px;top:820px" width="16" height="16" viewBox="0 0 16 16"><circle cx="8" cy="8" r="6.35" fill="none" stroke="#8f8b85" stroke-width="1.15"/><rect x="7.4" y="7.3" width="1.2" height="3.2" rx="0.5" fill="#8f8b85"/><circle cx="8" cy="5.4" r="0.7" fill="#8f8b85"/></svg>
<svg class="b" style="left:0;top:0" width="1920" height="1080" viewBox="0 0 1920 1080"><line x1="1029.5" y1="860.3" x2="1910" y2="860.3" stroke="rgba(240,250,255,0.09)" stroke-width="1"/><line x1="1029.5" y1="900.5" x2="1910" y2="900.5" stroke="rgba(240,250,255,0.09)" stroke-width="1"/><line x1="1029.5" y1="939" x2="1910" y2="939" stroke="rgba(240,250,255,0.09)" stroke-width="1"/><line x1="1032.50" y1="860.3" x2="1032.50" y2="943" stroke="rgba(240,250,255,0.09)" stroke-width="1"/><line x1="1178.90" y1="860.3" x2="1178.90" y2="943" stroke="rgba(240,250,255,0.09)" stroke-width="1"/><line x1="1325.30" y1="860.3" x2="1325.30" y2="943" stroke="rgba(240,250,255,0.09)" stroke-width="1"/><line x1="1471.70" y1="860.3" x2="1471.70" y2="943" stroke="rgba(240,250,255,0.09)" stroke-width="1"/><line x1="1618.10" y1="860.3" x2="1618.10" y2="943" stroke="rgba(240,250,255,0.09)" stroke-width="1"/><line x1="1764.50" y1="860.3" x2="1764.50" y2="943" stroke="rgba(240,250,255,0.09)" stroke-width="1"/><path d="M1029.50 939.00 L1852.34 939.00" fill="none" stroke="#73bf69" stroke-width="2" stroke-linejoin="round"/></svg>
<div class="t" style="left:423.00px;width:600px;text-align:right;top:853.47px;font-size:12.5px;line-height:15.0px;font-weight:400;color:#ccccd8;">100 B/s</div>
<div class="t" style="left:423.00px;width:600px;text-align:right;top:893.67px;font-size:12.5px;line-height:15.0px;font-weight:400;color:#ccccd8;">50 B/s</div>
<div class="t" style="left:423.00px;width:600px;text-align:right;top:932.17px;font-size:12.5px;line-height:15.0px;font-weight:400;color:#ccccd8;">0 B/s</div>
<div class="t" style="left:882.50px;width:300px;text-align:center;top:946.96px;font-size:12.4px;line-height:14.88px;font-weight:400;color:#ccccd8;">10:00</div>
<div class="t" style="left:1028.90px;width:300px;text-align:center;top:946.96px;font-size:12.4px;line-height:14.88px;font-weight:400;color:#ccccd8;">10:05</div>
<div class="t" style="left:1175.30px;width:300px;text-align:center;top:946.96px;font-size:12.4px;line-height:14.88px;font-weight:400;color:#ccccd8;">10:10</div>
<div class="t" style="left:1321.70px;width:300px;text-align:center;top:946.96px;font-size:12.4px;line-height:14.88px;font-weight:400;color:#ccccd8;">10:15</div>
<div class="t" style="left:1468.10px;width:300px;text-align:center;top:946.96px;font-size:12.4px;line-height:14.88px;font-weight:400;color:#ccccd8;">10:20</div>
<div class="t" style="left:1614.50px;width:300px;text-align:center;top:946.96px;font-size:12.4px;line-height:14.88px;font-weight:400;color:#ccccd8;">10:25</div>
<div class="b" style="left:981px;top:972.80px;width:14px;height:4px;border-radius:2px;background:#52823e"></div>
<div class="t" style="left:1003.50px;top:966.96px;font-size:12.4px;line-height:14.88px;font-weight:400;color:#d8d4cb;">last_virtual - 127.0.0.1:9142</div>
<div class="b" style="left:2px;top:1001px;width:958px;height:182px;background:#17181a;border:1px solid #1d1e21;border-radius:2px;box-sizing:border-box;"></div>
<div class="t" style="left:11.30px;top:1009.75px;font-size:14px;line-height:16.8px;font-weight:700;color:#d8d4cb;letter-spacing:0.12px">Packets inbound / 1m</div>
<svg class="b" style="left:173px;top:1010px" width="16" height="16" viewBox="0 0 16 16"><circle cx="8" cy="8" r="6.35" fill="none" stroke="#8f8b85" stroke-width="1.15"/><rect x="7.4" y="7.3" width="1.2" height="3.2" rx="0.5" fill="#8f8b85"/><circle cx="8" cy="5.4" r="0.7" fill="#8f8b85"/></svg>
<svg class="b" style="left:0;top:0" width="1920" height="1080" viewBox="0 0 1920 1080"><line x1="46.25" y1="1050.5" x2="46.25" y2="1080" stroke="rgba(240,250,255,0.09)" stroke-width="1"/><line x1="196.25" y1="1050.5" x2="196.25" y2="1080" stroke="rgba(240,250,255,0.09)" stroke-width="1"/><line x1="346.25" y1="1050.5" x2="346.25" y2="1080" stroke="rgba(240,250,255,0.09)" stroke-width="1"/><line x1="496.25" y1="1050.5" x2="496.25" y2="1080" stroke="rgba(240,250,255,0.09)" stroke-width="1"/><line x1="646.25" y1="1050.5" x2="646.25" y2="1080" stroke="rgba(240,250,255,0.09)" stroke-width="1"/><line x1="796.25" y1="1050.5" x2="796.25" y2="1080" stroke="rgba(240,250,255,0.09)" stroke-width="1"/><path d="M46.25 1080.00 C56.25 1080.00 66.25 1080.00 76.25 1080.00 C86.25 1080.00 96.25 1080.00 106.25 1080.00 C116.25 1080.00 126.25 1080.00 136.25 1080.00 C146.25 1080.00 156.25 1080.00 166.25 1080.00 C176.25 1080.00 186.25 1081.00 196.25 1081.00 C206.25 1081.00 216.25 1076.00 226.25 1076.00 C236.25 1076.00 246.25 1081.00 256.25 1081.00 C266.25 1081.00 276.25 1080.48 286.25 1080.00 C296.25 1079.52 306.25 1078.75 316.25 1077.50 C326.25 1076.25 336.25 1070.00 346.25 1070.00 C356.25 1070.00 366.25 1096.00 376.25 1096.00 C386.25 1096.00 396.25 1080.00 406.25 1080.00 C416.25 1080.00 426.25 1081.00 436.25 1081.00 C446.25 1081.00 456.25 1056.50 466.25 1056.50 C476.25 1056.50 486.25 1060.67 496.25 1064.00 C506.25 1067.33 516.25 1074.36 526.25 1079.00 C536.25 1083.64 546.25 1092.00 556.25 1092.00 C566.25 1092.00 576.25 1080.00 586.25 1080.00 C596.25 1080.00 606.25 1080.00 616.25 1080.00 C626.25 1080.00 636.25 1080.00 646.25 1080.00 C656.25 1080.00 666.25 1080.00 676.25 1080.00 C686.25 1080.00 696.25 1080.00 706.25 1080.00 C716.25 1080.00 726.25 1080.00 736.25 1080.00 C746.25 1080.00 756.25 1080.00 766.25 1080.00 C776.25 1080.00 786.25 1080.00 796.25 1080.00 C806.25 1080.00 816.25 1080.00 826.25 1080.00 C836.25 1080.00 846.25 1080.00 856.25 1080.00 C866.25 1080.00 876.25 1080.00 886.25 1080.00 L886.25 1090 L46.25 1090 Z" fill="rgba(120,180,105,0.3)"/><path d="M46.25 1080.00 C56.25 1080.00 66.25 1080.00 76.25 1080.00 C86.25 1080.00 96.25 1080.00 106.25 1080.00 C116.25 1080.00 126.25 1080.00 136.25 1080.00 C146.25 1080.00 156.25 1080.00 166.25 1080.00 C176.25 1080.00 186.25 1081.00 196.25 1081.00 C206.25 1081.00 216.25 1076.00 226.25 1076.00 C236.25 1076.00 246.25 1081.00 256.25 1081.00 C266.25 1081.00 276.25 1080.48 286.25 1080.00 C296.25 1079.52 306.25 1078.75 316.25 1077.50 C326.25 1076.25 336.25 1070.00 346.25 1070.00 C356.25 1070.00 366.25 1096.00 376.25 1096.00 C386.25 1096.00 396.25 1080.00 406.25 1080.00 C416.25 1080.00 426.25 1081.00 436.25 1081.00 C446.25 1081.00 456.25 1056.50 466.25 1056.50 C476.25 1056.50 486.25 1060.67 496.25 1064.00 C506.25 1067.33 516.25 1074.36 526.25 1079.00 C536.25 1083.64 546.25 1092.00 556.25 1092.00 C566.25 1092.00 576.25 1080.00 586.25 1080.00 C596.25 1080.00 606.25 1080.00 616.25 1080.00 C626.25 1080.00 636.25 1080.00 646.25 1080.00 C656.25 1080.00 666.25 1080.00 676.25 1080.00 C686.25 1080.00 696.25 1080.00 706.25 1080.00 C716.25 1080.00 726.25 1080.00 736.25 1080.00 C746.25 1080.00 756.25 1080.00 766.25 1080.00 C776.25 1080.00 786.25 1080.00 796.25 1080.00 C806.25 1080.00 816.25 1080.00 826.25 1080.00 C836.25 1080.00 846.25 1080.00 856.25 1080.00 C866.25 1080.00 876.25 1080.00 886.25 1080.00" fill="none" stroke="#73bf69" stroke-width="2" stroke-linejoin="round"/></svg>
<div class="t" style="left:-563.25px;width:600px;text-align:right;top:1072.17px;font-size:12.5px;line-height:15.0px;font-weight:400;color:#ccccd8;">500</div>
<div class="b" style="left:968px;top:1001px;width:958px;height:182px;background:#17181a;border:1px solid #1d1e21;border-radius:2px;box-sizing:border-box;"></div>
<div class="t" style="left:977.30px;top:1009.75px;font-size:14px;line-height:16.8px;font-weight:700;color:#d8d4cb;letter-spacing:0.12px">Packets outbound / 1m</div>
<svg class="b" style="left:1149px;top:1010px" width="16" height="16" viewBox="0 0 16 16"><circle cx="8" cy="8" r="6.35" fill="none" stroke="#8f8b85" stroke-width="1.15"/><rect x="7.4" y="7.3" width="1.2" height="3.2" rx="0.5" fill="#8f8b85"/><circle cx="8" cy="5.4" r="0.7" fill="#8f8b85"/></svg>
<svg class="b" style="left:0;top:0" width="1920" height="1080" viewBox="0 0 1920 1080"><line x1="1012.20" y1="1050.5" x2="1012.20" y2="1080" stroke="rgba(240,250,255,0.09)" stroke-width="1"/><line x1="1162.20" y1="1050.5" x2="1162.20" y2="1080" stroke="rgba(240,250,255,0.09)" stroke-width="1"/><line x1="1312.20" y1="1050.5" x2="1312.20" y2="1080" stroke="rgba(240,250,255,0.09)" stroke-width="1"/><line x1="1462.20" y1="1050.5" x2="1462.20" y2="1080" stroke="rgba(240,250,255,0.09)" stroke-width="1"/><line x1="1612.20" y1="1050.5" x2="1612.20" y2="1080" stroke="rgba(240,250,255,0.09)" stroke-width="1"/><line x1="1762.20" y1="1050.5" x2="1762.20" y2="1080" stroke="rgba(240,250,255,0.09)" stroke-width="1"/><path d="M1012.20 1080.00 C1022.20 1080.00 1032.20 1080.00 1042.20 1080.00 C1052.20 1080.00 1062.20 1080.00 1072.20 1080.00 C1082.20 1080.00 1092.20 1080.00 1102.20 1080.00 C1112.20 1080.00 1122.20 1080.00 1132.20 1080.00 C1142.20 1080.00 1152.20 1080.00 1162.20 1080.00 C1172.20 1080.00 1182.20 1080.00 1192.20 1080.00 C1202.20 1080.00 1212.20 1080.00 1222.20 1080.00 C1232.20 1080.00 1242.20 1080.00 1252.20 1080.00 C1262.20 1080.00 1272.20 1078.72 1282.20 1077.50 C1292.20 1076.28 1302.20 1070.60 1312.20 1070.60 C1322.20 1070.60 1332.20 1096.00 1342.20 1096.00 C1352.20 1096.00 1362.20 1080.00 1372.20 1080.00 C1382.20 1080.00 1392.20 1081.00 1402.20 1081.00 C1412.20 1081.00 1422.20 1057.60 1432.20 1057.60 C1442.20 1057.60 1452.20 1061.01 1462.20 1064.00 C1472.20 1066.99 1482.20 1074.36 1492.20 1079.00 C1502.20 1083.64 1512.20 1092.00 1522.20 1092.00 C1532.20 1092.00 1542.20 1080.00 1552.20 1080.00 C1562.20 1080.00 1572.20 1080.00 1582.20 1080.00 C1592.20 1080.00 1602.20 1080.00 1612.20 1080.00 C1622.20 1080.00 1632.20 1080.00 1642.20 1080.00 C1652.20 1080.00 1662.20 1080.00 1672.20 1080.00 C1682.20 1080.00 1692.20 1080.00 1702.20 1080.00 C1712.20 1080.00 1722.20 1080.00 1732.20 1080.00 C1742.20 1080.00 1752.20 1080.00 1762.20 1080.00 C1772.20 1080.00 1782.20 1080.00 1792.20 1080.00 C1802.20 1080.00 1812.20 1080.00 1822.20 1080.00 C1832.20 1080.00 1842.20 1080.00 1852.20 1080.00 L1852.20 1090 L1012.20 1090 Z" fill="rgba(120,180,105,0.3)"/><path d="M1012.20 1080.00 C1022.20 1080.00 1032.20 1080.00 1042.20 1080.00 C1052.20 1080.00 1062.20 1080.00 1072.20 1080.00 C1082.20 1080.00 1092.20 1080.00 1102.20 1080.00 C1112.20 1080.00 1122.20 1080.00 1132.20 1080.00 C1142.20 1080.00 1152.20 1080.00 1162.20 1080.00 C1172.20 1080.00 1182.20 1080.00 1192.20 1080.00 C1202.20 1080.00 1212.20 1080.00 1222.20 1080.00 C1232.20 1080.00 1242.20 1080.00 1252.20 1080.00 C1262.20 1080.00 1272.20 1078.72 1282.20 1077.50 C1292.20 1076.28 1302.20 1070.60 1312.20 1070.60 C1322.20 1070.60 1332.20 1096.00 1342.20 1096.00 C1352.20 1096.00 1362.20 1080.00 1372.20 1080.00 C1382.20 1080.00 1392.20 1081.00 1402.20 1081.00 C1412.20 1081.00 1422.20 1057.60 1432.20 1057.60 C1442.20 1057.60 1452.20 1061.01 1462.20 1064.00 C1472.20 1066.99 1482.20 1074.36 1492.20 1079.00 C1502.20 1083.64 1512.20 1092.00 1522.20 1092.00 C1532.20 1092.00 1542.20 1080.00 1552.20 1080.00 C1562.20 1080.00 1572.20 1080.00 1582.20 1080.00 C1592.20 1080.00 1602.20 1080.00 1612.20 1080.00 C1622.20 1080.00 1632.20 1080.00 1642.20 1080.00 C1652.20 1080.00 1662.20 1080.00 1672.20 1080.00 C1682.20 1080.00 1692.20 1080.00 1702.20 1080.00 C1712.20 1080.00 1722.20 1080.00 1732.20 1080.00 C1742.20 1080.00 1752.20 1080.00 1762.20 1080.00 C1772.20 1080.00 1782.20 1080.00 1792.20 1080.00 C1802.20 1080.00 1812.20 1080.00 1822.20 1080.00 C1832.20 1080.00 1842.20 1080.00 1852.20 1080.00" fill="none" stroke="#73bf69" stroke-width="2" stroke-linejoin="round"/></svg>
<div class="t" style="left:402.70px;width:600px;text-align:right;top:1067.67px;font-size:12.5px;line-height:15.0px;font-weight:400;color:#ccccd8;">400</div>
<div class="b" style="left:0px;top:1076px;width:1920px;height:1px;background:#444548;border-radius:0px;box-sizing:border-box;"></div>
<div class="b" style="left:0px;top:1077px;width:1920px;height:3px;background:#060607;border-radius:0px;box-sizing:border-box;"></div>
</div></body></html>
